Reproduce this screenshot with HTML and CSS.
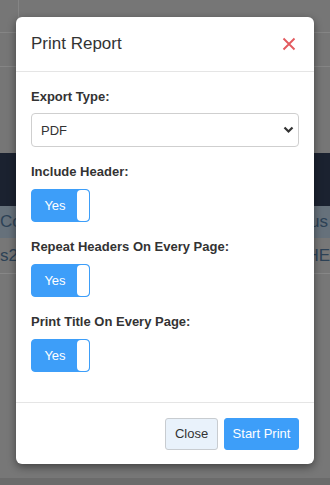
FILE: index.html
```html
<!DOCTYPE html>
<html>
<head>
<meta charset="utf-8">
<link rel="stylesheet" href="styles.css">
</head>
<body>
<div class="page">
  <div class="bg-top">
    <div class="bg-row r1"><span class="vline"></span></div>
    <div class="bg-row r2"></div>
    <div class="bg-row r3"></div>
  </div>
  <div class="bg-dark"></div>
  <div class="bg-thead"><span>Cos</span><span>jus</span></div>
  <div class="bg-trow"><span>s20</span><span>THE</span></div>
  <div class="bg-rest"></div>
  <div class="bg-foot"></div>
</div>

<div class="modal">
  <div class="modal-header">
    <h4 class="modal-title">Print Report</h4>
    <button class="close-x" aria-label="Close">
      <svg width="16" height="16" viewBox="0 0 16 16"><path d="M2.5 2.5L13.5 13.5M13.5 2.5L2.5 13.5" stroke="#e35a5f" stroke-width="1.9" fill="none"/></svg>
    </button>
  </div>
  <div class="modal-body">
    <div class="form-group">
      <label class="lbl">Export Type:</label>
      <div class="select">
        <span>PDF</span>
        <svg width="11" height="8" viewBox="0 0 11 8"><path d="M1.5 1.5L5.5 5.5L9.5 1.5" stroke="#333" stroke-width="2.2" fill="none"/></svg>
      </div>
    </div>
    <div class="form-group">
      <label class="lbl">Include Header:</label>
      <div class="toggle"><span class="on">Yes</span><span class="handle"></span></div>
    </div>
    <div class="form-group">
      <label class="lbl">Repeat Headers On Every Page:</label>
      <div class="toggle"><span class="on">Yes</span><span class="handle"></span></div>
    </div>
    <div class="form-group">
      <label class="lbl">Print Title On Every Page:</label>
      <div class="toggle"><span class="on">Yes</span><span class="handle"></span></div>
    </div>
  </div>
  <div class="modal-footer">
    <button class="btn btn-close">Close</button>
    <button class="btn btn-primary">Start Print</button>
  </div>
</div>
</body>
</html>
```
FILE: styles.css
```css
* { box-sizing: border-box; }
html, body { margin: 0; padding: 0; }
body {
  width: 330px;
  height: 485px;
  overflow: hidden;
  background: #767676;
  font-family: "Liberation Sans", Arial, sans-serif;
  position: relative;
}
.page { display: flex; flex-direction: column; height: 485px; }
.bg-top { display: flex; flex-direction: column; }
.bg-row { height: 34px; border-bottom: 1px solid #858585; position: relative; }
.bg-row.r1 { height: 33px; }
.bg-row.r3 { height: 86px; border-bottom: none; }
.vline { position: absolute; left: 18px; top: 0; width: 1px; height: 33px; background: #858585; }
.bg-dark { height: 53px; background: #1b2230; }
.bg-thead {
  height: 32px;
  background: #66717b;
  display: flex; justify-content: space-between; align-items: center;
  color: #2d4256; font-size: 17px;
}
.bg-thead span:last-child { margin-right: 2px; }
.bg-trow {
  height: 36px;
  background: #777777;
  border-bottom: 1px solid #878787;
  display: flex; justify-content: space-between; align-items: center;
  color: #2d4256; font-size: 17px;
}
.bg-rest { flex: 1; background: #777777; }
.bg-foot { height: 7px; background: #6b6b6b; }

.modal {
  position: absolute;
  left: 16px;
  top: 17px;
  width: 298px;
  height: 447px;
  background: #fff;
  border-radius: 6px;
  box-shadow: 0 3px 9px rgba(0,0,0,0.45);
  display: flex;
  flex-direction: column;
}
.modal-header {
  height: 55px;
  padding: 0 15px;
  border-bottom: 1px solid #e5e5e5;
  display: flex;
  align-items: center;
  justify-content: space-between;
}
.modal-title {
  margin: 0;
  font-size: 17px;
  font-weight: 400;
  color: #333;
}
.close-x {
  border: 0; background: none; padding: 0; margin-right: 2px;
  width: 16px; height: 16px; display: flex;
}
.modal-body {
  padding: 15px 15px 15px;
  flex: 1;
}
.form-group { margin-bottom: 15px; display: flex; flex-direction: column; align-items: flex-start; }
.lbl {
  font-size: 13px;
  font-weight: 700;
  color: #333;
  line-height: 20px;
  margin-bottom: 6px;
}
.select {
  width: 268px;
  height: 34px;
  border: 1px solid #cfcfcf;
  border-radius: 4px;
  display: flex;
  align-items: center;
  justify-content: space-between;
  padding: 0 4px 0 9px;
  font-size: 13px;
  color: #333;
}
.toggle {
  margin-top: 1px;
  width: 59px;
  height: 33px;
  background: #3d9ef9;
  border: 1px solid #3d9ef9;
  border-radius: 4px;
  display: flex;
  align-items: stretch;
}
.toggle .on {
  flex: 1;
  color: #fff;
  font-size: 13px;
  display: flex; align-items: center; justify-content: center;
  padding-left: 1px;
}
.toggle .handle {
  width: 12px;
  background: #fff;
  border-radius: 4px;
}
.modal-footer {
  flex: 0 0 62px;
  border-top: 1px solid #e5e5e5;
  display: flex;
  justify-content: flex-end;
  align-items: center;
  gap: 6px;
  padding: 0 15px;
}
.btn {
  height: 32px;
  border-radius: 3px;
  font-family: inherit;
  font-size: 13px;
  padding: 0;
  white-space: nowrap;
  cursor: pointer;
}
.btn-close {
  width: 53px;
  background: #e9f2fb;
  border: 1px solid #c8ccd0;
  color: #333;
}
.btn-primary {
  width: 75px;
  background: #3d9ef9;
  border: 1px solid #3d9ef9;
  color: #fff;
}
```
